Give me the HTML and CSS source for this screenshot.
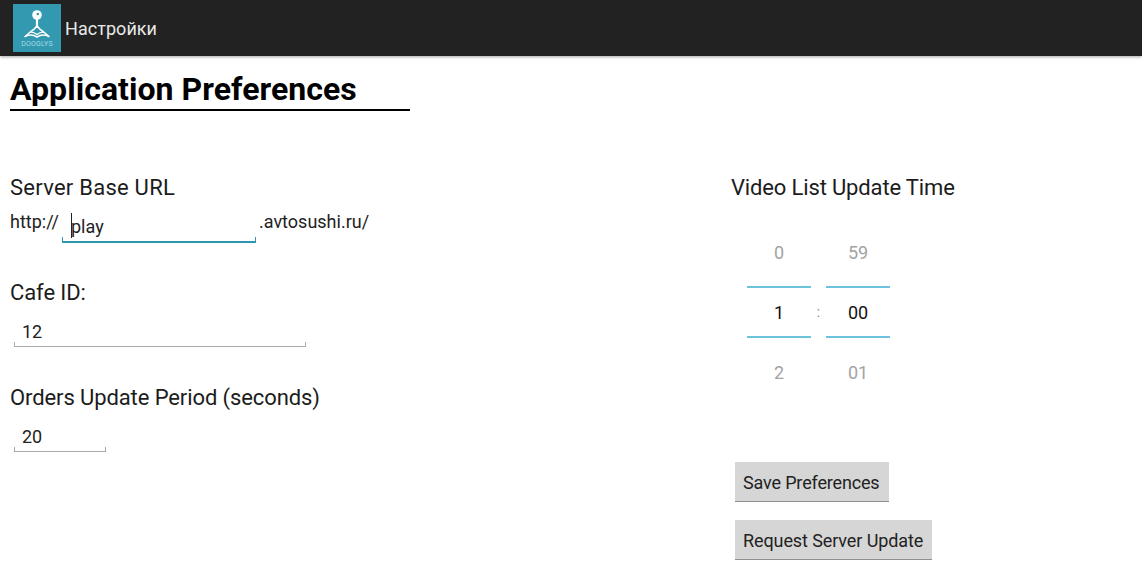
FILE: index.html
```html
<!DOCTYPE html>
<html lang="en">
<head>
<meta charset="utf-8">
<title>Настройки</title>
<link rel="stylesheet" href="styles.css">
</head>
<body>
<header class="bar">
  <div class="logo">
    <svg class="logo-mark" viewBox="0 0 30 32" fill="none">
      <circle cx="15" cy="7" r="4.800" fill="#fff"/>
      <circle cx="15.800" cy="6" r="1.300" fill="#3399b0"/>
      <path d="M15 11v9" stroke="#fff" stroke-width="2.200"/>
      <path d="M15 18c-2.500 3-3.500 4-6 5.500L3 28.500c4-2 8.500-2 12 .5 3.500-2.500 8-2.500 12-.5l-6-5c-2.500-1.500-3.500-2.500-6-5.500z" stroke="#fff" stroke-width="1.600" stroke-linejoin="round"/>
      <path d="M7 24.500c3-1 5.500 0 8 2 2.500-2 5-3 8-2" stroke="#fff" stroke-width="1.300"/>
    </svg>
    <span class="logo-text">DOOGLYS</span>
  </div>
  <span class="bar-title">Настройки</span>
</header>
<main class="page">
  <h1 class="heading">Application Preferences</h1>
  <div class="columns">
    <section class="left">
      <h2 class="label label-server">Server Base URL</h2>
      <div class="url-row">
        <span class="url-text url-prefix">http://</span>
        <div class="field field-url"><span class="caret"></span>play</div>
        <span class="url-text url-suffix">.avtosushi.ru/</span>
      </div>
      <h2 class="label label-cafe">Cafe ID:</h2>
      <div class="field field-cafe">12</div>
      <h2 class="label label-orders">Orders Update Period (seconds)</h2>
      <div class="field field-orders">20</div>
    </section>
    <section class="right">
      <h2 class="label label-video">Video List Update Time</h2>
      <div class="picker">
        <div class="spinner">
          <div class="cell dim dim-top">0</div>
          <div class="cell current">1</div>
          <div class="cell dim dim-bottom">2</div>
        </div>
        <div class="colon">:</div>
        <div class="spinner">
          <div class="cell dim dim-top">59</div>
          <div class="cell current">00</div>
          <div class="cell dim dim-bottom">01</div>
        </div>
      </div>
      <div class="actions">
        <button class="btn btn-save" type="button">Save Preferences</button>
        <button class="btn" type="button">Request Server Update</button>
      </div>
    </section>
  </div>
</main>
</body>
</html>
```
FILE: styles.css
```css
* { box-sizing: border-box; }
html, body { margin: 0; padding: 0; }
body {
  width: 1142px;
  height: 575px;
  overflow: hidden;
  background: #fff;
  color: #111;
  font-family: Roboto, "Liberation Sans", sans-serif;
}
.bar {
  height: 56px;
  background: #222;
  display: flex;
  align-items: center;
  padding-left: 13px;
  box-shadow: 0 1px 3px rgba(0, 0, 0, .35);
}
.logo {
  width: 48px;
  height: 48px;
  background: #3399b0;
  display: flex;
  flex-direction: column;
  align-items: center;
  padding-top: 4px;
}
.logo-mark { display: block; width: 30px; height: 32px; flex: none; }
.logo-text {
  font-size: 7px;
  line-height: 8px;
  letter-spacing: .2px;
  color: #a6dbe6;
}
.bar-title {
  margin-left: 4px;
  font-size: 18px;
  letter-spacing: .05px;
  color: #e8e8e8;
}
.page { padding: 14px 0 0 10px; }
.heading {
  margin: 0;
  width: 400px;
  height: 41px;
  border-bottom: 2px solid #000;
  font-size: 32px;
  line-height: 38px;
  font-weight: 700;
  letter-spacing: .05px;
  color: #000;
  white-space: nowrap;
}
.columns {
  display: flex;
  margin-top: 63px;
}
.left { width: 721px; }
.label {
  margin: 0;
  font-size: 22px;
  line-height: 28px;
  font-weight: 400;
  letter-spacing: -.1px;
  color: #1c1c1c;
}
.label-server { letter-spacing: .25px; }
.label-video { letter-spacing: -.15px; }
.url-row {
  display: flex;
  align-items: flex-start;
  margin-top: 8px;
  height: 36px;
}
.url-text {
  font-size: 18px;
  line-height: 24px;
  color: #222;
}
.url-prefix { width: 48px; }
.url-suffix { margin-left: 3px; }
.field {
  position: relative;
  height: 31px;
  font-size: 18px;
  line-height: 24px;
  color: #222;
  border-bottom: 1px solid #aaa;
}
.field::before,
.field::after {
  content: "";
  position: absolute;
  bottom: 0;
  width: 1px;
  height: 4px;
  background: #aaa;
}
.field::before { left: 0; }
.field::after { right: 0; }
.field-url {
  width: 194px;
  height: 33px;
  margin-left: 4px;
  padding: 5px 0 0 9px;
  border-bottom: 2px solid #2f97ad;
}
.field-url::before,
.field-url::after { background: #2f97ad; }
.caret {
  position: absolute;
  left: 9px;
  top: 3px;
  width: 1px;
  height: 25px;
  background: #222;
}
.label-cafe { margin-top: 33px; }
.field-cafe {
  width: 292px;
  margin: 9px 0 0 4px;
  padding: 4px 0 0 8px;
}
.label-orders { margin-top: 37px; }
.field-orders {
  width: 92px;
  margin: 9px 0 0 4px;
  padding: 4px 0 0 8px;
}
.right { width: 300px; }
.picker {
  display: flex;
  margin: 18px 0 0 16px;
}
.spinner { width: 64px; }
.cell {
  display: flex;
  align-items: center;
  justify-content: center;
  font-size: 18px;
  line-height: 24px;
}
.dim { color: #a3a3a3; }
.dim-top { height: 66px; }
.dim-bottom { height: 70px; padding-bottom: 1px; }
.current {
  height: 52px;
  padding-top: 1px;
  color: #111;
  border-top: 2px solid #6cc3dd;
  border-bottom: 2px solid #6cc3dd;
}
.colon {
  width: 15px;
  padding-top: 80px;
  text-align: center;
  font-size: 14px;
  line-height: 24px;
  color: #888;
}
.actions {
  display: flex;
  flex-direction: column;
  align-items: flex-start;
  gap: 18px;
  margin: 54px 0 0 4px;
}
.btn {
  height: 40px;
  padding: 2px 9px 0 8px;
  border: 0;
  border-bottom: 1px solid #8f8f8f;
  border-radius: 0;
  background: #d6d6d6;
  font-family: inherit;
  font-size: 18px;
  letter-spacing: -.1px;
  color: #222;
  white-space: nowrap;
}
.btn-save { letter-spacing: -.16px; }
```
